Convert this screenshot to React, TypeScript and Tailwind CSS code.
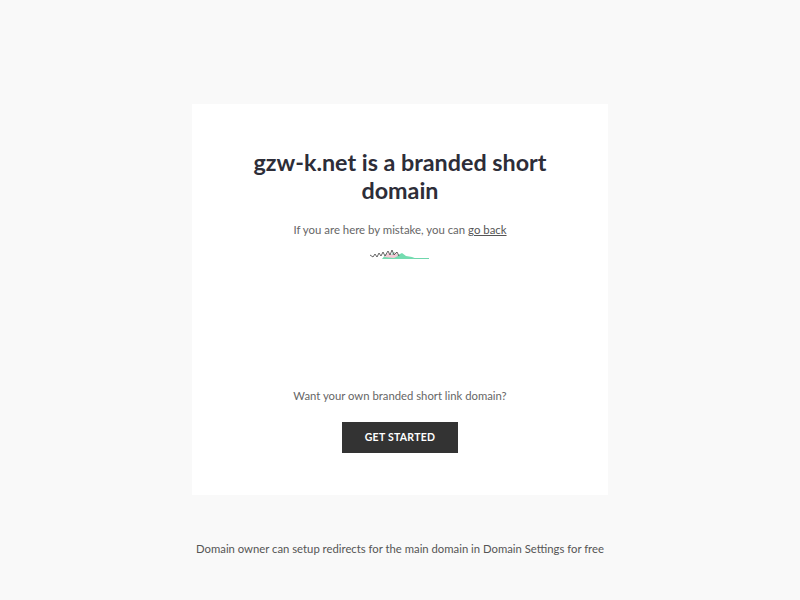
const FONT = { fontFamily: 'Lato, "Noto Sans", sans-serif' };

function Grass() {
  return (
    <svg width="60" height="12" viewBox="0 0 60 12" className="block">
      <path d="M12 11 L16 6 L20 8 L24 4 L28 7 L32 5 L36 8 L42 9 L46 10.5 L46 11 Z" fill="#74dcb0" />
      <path d="M14 9 L18 5 L22 7 L26 4 L28 8 L24 10 Z" fill="#f5c9d6" />
      <path
        d="M0 7 L3 9 L5 6 L7 9 L9 5 L11 8 L13 4 L15 8 L18 3 L20 7 L22 2 L24 7 L27 4 L29 8"
        fill="none"
        stroke="#555"
        strokeWidth="0.9"
      />
      <path d="M44 10.5 L59 10.5" stroke="#6fd6ac" strokeWidth="1" />
    </svg>
  );
}

export default function App() {
  return (
    <div className="min-h-screen bg-[#f9f9f9] text-[#333]" style={FONT}>
      <div className="flex flex-col items-center pt-[104px]">
        <div className="flex h-[391px] w-[416px] flex-col items-center bg-white pt-[44px]">
          <h1 className="w-[320px] text-center text-[23.3px] font-bold leading-[28px] text-[#2d2d38]">
            gzw-k.net is a branded short domain
          </h1>
          <p className="mt-[17px] text-[11.4px] text-[#666]">
            If you are here by mistake, you can{" "}
            <a href="#" className="text-[#555] underline">
              go back
            </a>
          </p>
          <div className="mt-[10px]">
            <Grass />
          </div>
          <p className="mt-[128px] text-[11.3px] text-[#666]">
            Want your own branded short link domain?
          </p>
          <button className="mt-[17px] h-[31px] w-[116px] bg-[#333] text-[10.5px] font-bold tracking-wide text-white">
            GET STARTED
          </button>
        </div>
        <p className="mt-[46px] text-[11.3px] text-[#555]">
          Domain owner can setup redirects for the main domain in Domain Settings for free
        </p>
      </div>
    </div>
  );
}
